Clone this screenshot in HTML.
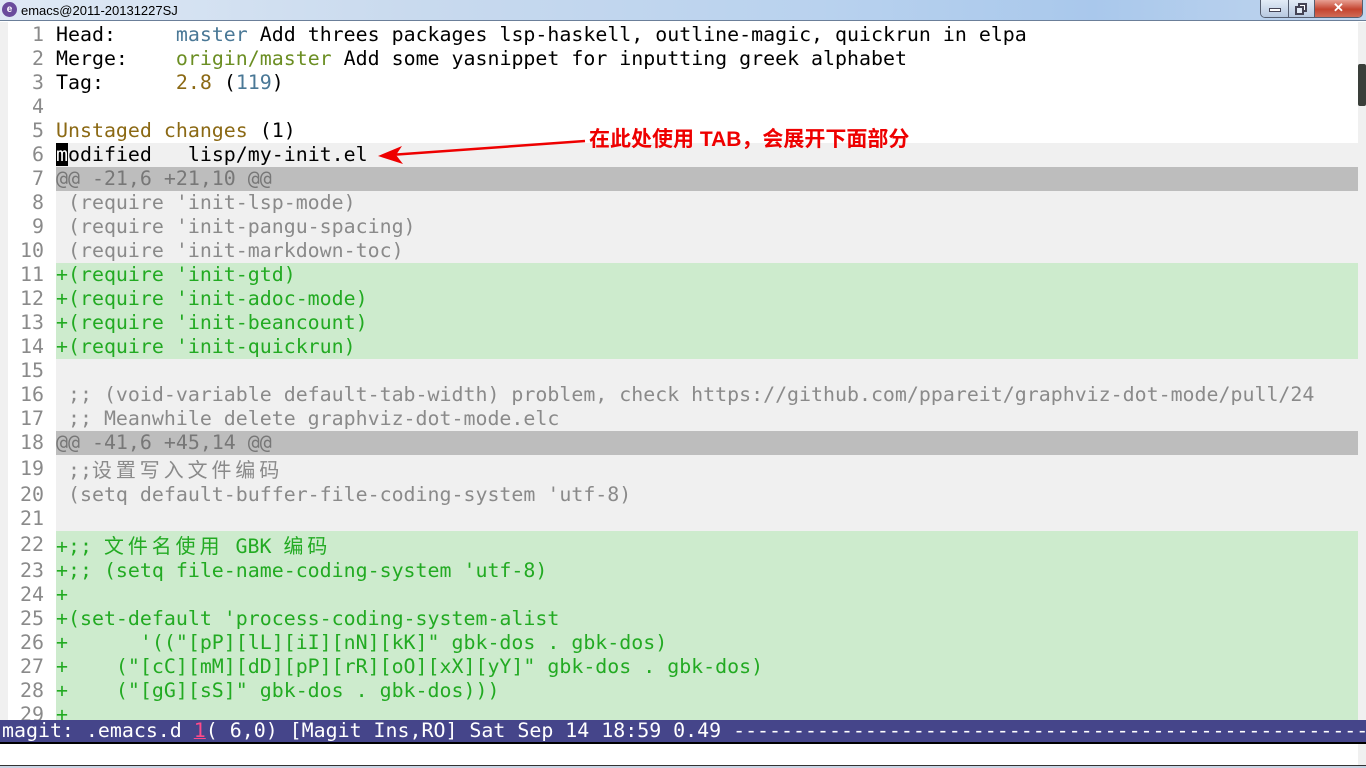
<!DOCTYPE html>
<html><head><meta charset="utf-8">
<style>
*{margin:0;padding:0;box-sizing:border-box}
body{width:1366px;height:768px;overflow:hidden;background:#fff;position:relative;font-family:"DejaVu Sans Mono","Liberation Mono","Noto Sans CJK SC",monospace}
#title{position:absolute;left:0;top:0;width:1366px;height:21px;background:linear-gradient(90deg,#dfe9f5 0%,#c9daee 30%,#b9d2ee 60%,#a9c8ec 80%,#c2d6ee 100%);border-bottom:1px solid #6b7f99}
#title .t{position:absolute;left:21px;top:3px;font:13px "Liberation Sans",sans-serif;color:#000}
#title .ic{position:absolute;left:2px;top:2px;width:15px;height:15px;border-radius:50%;background:#6a4c9c;color:#fff;font:bold 10px "Liberation Sans",sans-serif;text-align:center;line-height:15px}
.btns{position:absolute;left:1260px;top:0;height:18px;width:103px;border:1px solid #555e70;border-top:none;border-radius:0 0 5px 5px;overflow:hidden;display:flex}
.btns div{height:17px}
.b1{width:28px;background:linear-gradient(#e3ecf7,#b7c9e0);border-right:1px solid #555e70;position:relative}
.b2{width:26px;background:linear-gradient(#e3ecf7,#b7c9e0);border-right:1px solid #555e70;position:relative}
.b3{flex:1;background:linear-gradient(#e8a093,#c4442f 55%,#d06a55);position:relative;color:#fff;font:bold 13px "Liberation Sans",sans-serif;text-align:center;line-height:16px}
#fringe{position:absolute;left:0;top:22px;width:8px;height:698px;background:#f0f0f0}
#sb{position:absolute;left:1358px;top:22px;width:8px;height:746px;background:#f0f0f0}
#thumb{position:absolute;left:1358px;top:64px;width:8px;height:42px;background:#3a3f3a;border-radius:2px}
#lines{position:absolute;left:8px;top:23px;width:1350px}
.l{position:relative;height:24px;line-height:24px;font-size:19.92px;white-space:pre;color:#000}
.l.tall{height:28px;line-height:28px}
.n{position:absolute;left:0;width:36px;text-align:right;color:#8a8a8a}
.c{position:absolute;left:48px;right:0;top:0;bottom:0;padding-left:0}
.ctx{background:#f0f0f0;color:#8a8a8a}
.hunk{background:#bdbdbd;color:#777}
.add{background:#cdebcd;color:#22aa22}
.hl{background:#f0f0f0}
.cj{font-family:"Noto Sans CJK SC","WenQuanYi Zen Hei",sans-serif;letter-spacing:4px}
.blue{color:#4a7896}.olive{color:#6b8e23}.gold{color:#8b6914}.brn{color:#8b6914}
.cur{background:#000;color:#fff}
#ml{position:absolute;left:0;top:720px;width:1366px;height:24px;background:#45458a;border-bottom:2px solid #000;color:#fff;font-size:19.92px;line-height:22px;white-space:pre;overflow:hidden;padding-left:2px}
#ml .r{color:#ff4a8a;text-decoration:underline}
#note{position:absolute;left:589px;top:123px;font:bold 21px "Liberation Sans","Noto Sans CJK SC",sans-serif;color:#ee0000;white-space:pre}
#bot{position:absolute;left:0;top:765px;width:1366px;height:3px;background:#c8d4e4;border-top:1px solid #333}
</style></head><body>
<div id="title"><div class="ic">e</div><div class="t">emacs@2011-20131227SJ</div>
<div class="btns"><div class="b1"><div style="position:absolute;left:8px;top:8px;width:12px;height:4px;background:#fff;border:1px solid #445"></div></div><div class="b2"><div style="position:absolute;left:9px;top:3px;width:9px;height:9px;border:2px solid #445;background:#fff"></div><div style="position:absolute;left:6px;top:6px;width:9px;height:9px;border:2px solid #445;background:#e3ecf7"></div></div><div class="b3">✕</div></div>
</div>
<div id="fringe"></div><div id="sb"></div><div id="thumb"></div>
<div id="lines">
<div class="l"><span class="n">1</span><span class="c">Head:     <span class="blue">master</span> Add threes packages lsp-haskell, outline-magic, quickrun in elpa</span></div>
<div class="l"><span class="n">2</span><span class="c">Merge:    <span class="olive">origin/master</span> Add some yasnippet for inputting greek alphabet</span></div>
<div class="l"><span class="n">3</span><span class="c">Tag:      <span class="gold">2.8</span> (<span class="blue">119</span>)</span></div>
<div class="l"><span class="n">4</span><span class="c"></span></div>
<div class="l"><span class="n">5</span><span class="c"><span class="brn">Unstaged changes</span> (1)</span></div>
<div class="l"><span class="n">6</span><span class="c hl"><span class="cur">m</span>odified   lisp/my-init.el</span></div>
<div class="l"><span class="n">7</span><span class="c hunk">@@ -21,6 +21,10 @@</span></div>
<div class="l"><span class="n">8</span><span class="c ctx"> (require 'init-lsp-mode)</span></div>
<div class="l"><span class="n">9</span><span class="c ctx"> (require 'init-pangu-spacing)</span></div>
<div class="l"><span class="n">10</span><span class="c ctx"> (require 'init-markdown-toc)</span></div>
<div class="l"><span class="n">11</span><span class="c add">+(require 'init-gtd)</span></div>
<div class="l"><span class="n">12</span><span class="c add">+(require 'init-adoc-mode)</span></div>
<div class="l"><span class="n">13</span><span class="c add">+(require 'init-beancount)</span></div>
<div class="l"><span class="n">14</span><span class="c add">+(require 'init-quickrun)</span></div>
<div class="l"><span class="n">15</span><span class="c ctx"></span></div>
<div class="l"><span class="n">16</span><span class="c ctx"> ;; (void-variable default-tab-width) problem, check https://github.com/ppareit/graphviz-dot-mode/pull/24</span></div>
<div class="l"><span class="n">17</span><span class="c ctx"> ;; Meanwhile delete graphviz-dot-mode.elc</span></div>
<div class="l"><span class="n">18</span><span class="c hunk">@@ -41,6 +45,14 @@</span></div>
<div class="l tall"><span class="n">19</span><span class="c ctx"> ;;<span class="cj">设置写入文件编码</span></span></div>
<div class="l"><span class="n">20</span><span class="c ctx"> (setq default-buffer-file-coding-system 'utf-8)</span></div>
<div class="l"><span class="n">21</span><span class="c ctx"></span></div>
<div class="l tall"><span class="n">22</span><span class="c add">+;; <span class="cj">文件名使用</span> GBK <span class="cj">编码</span></span></div>
<div class="l"><span class="n">23</span><span class="c add">+;; (setq file-name-coding-system 'utf-8)</span></div>
<div class="l"><span class="n">24</span><span class="c add">+</span></div>
<div class="l"><span class="n">25</span><span class="c add">+(set-default 'process-coding-system-alist</span></div>
<div class="l"><span class="n">26</span><span class="c add">+      '(("[pP][lL][iI][nN][kK]" gbk-dos . gbk-dos)</span></div>
<div class="l"><span class="n">27</span><span class="c add">+    ("[cC][mM][dD][pP][rR][oO][xX][yY]" gbk-dos . gbk-dos)</span></div>
<div class="l"><span class="n">28</span><span class="c add">+    ("[gG][sS]" gbk-dos . gbk-dos)))</span></div>
<div class="l"><span class="n">29</span><span class="c add">+</span></div>
</div>
<svg style="position:absolute;left:370px;top:138px" width="220" height="30"><line x1="215" y1="3" x2="20" y2="17" stroke="#ee0000" stroke-width="2.5"/><polygon points="8,18 32,8 26,17 33,26" fill="#ee0000"/></svg>
<div id="note">在此处使用 TAB，会展开下面部分</div>
<div id="ml">magit: .emacs.d <span class="r">1</span>( 6,0) [Magit Ins,RO] Sat Sep 14 18:59 0.49 ------------------------------------------------------------------------</div>
<div id="bot"></div>
</body></html>
